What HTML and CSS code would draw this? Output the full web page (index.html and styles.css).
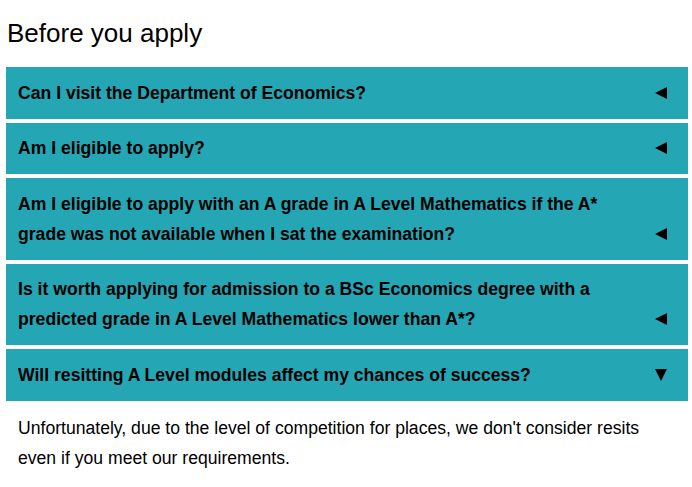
FILE: index.html
```html
<!DOCTYPE html>
<html lang="en">
    <head>
        <meta charset="UTF-8">
        <meta name="viewport" content="width=device-width, initial-scale=1.0">
        <title>Before you apply</title>
        <link rel="stylesheet" href="styles.css">
    </head>
    <body>
        <div id="faq">
            <h2>Before you apply</h2>
            <div class="question">
                <span class="q-text">Can I visit the Department of Economics?</span>
                <svg class="arrow" width="12" height="12" viewBox="0 0 12 12"><polygon points="12,0 12,12 0,6" fill="#000"/></svg>
            </div>
            <div class="question">
                <span class="q-text">Am I eligible to apply?</span>
                <svg class="arrow" width="12" height="12" viewBox="0 0 12 12"><polygon points="12,0 12,12 0,6" fill="#000"/></svg>
            </div>
            <div class="question">
                <span class="q-text">Am I eligible to apply with an A grade in A Level Mathematics if the A* grade was not available when I sat the examination?</span>
                <svg class="arrow" width="12" height="12" viewBox="0 0 12 12"><polygon points="12,0 12,12 0,6" fill="#000"/></svg>
            </div>
            <div class="question">
                <span class="q-text">Is it worth applying for admission to a BSc Economics degree with a predicted grade in A Level Mathematics lower than A*?</span>
                <svg class="arrow" width="12" height="12" viewBox="0 0 12 12"><polygon points="12,0 12,12 0,6" fill="#000"/></svg>
            </div>
            <div class="question open">
                <span class="q-text">Will resitting A Level modules affect my chances of success?</span>
                <svg class="arrow" width="12" height="12" viewBox="0 0 12 12"><polygon points="0,0 12,0 6,12" fill="#000"/></svg>
            </div>
            <p class="answer">Unfortunately, due to the level of competition for places, we don't consider resits even if you meet our requirements.</p>
        </div>
    </body>
</html>
```

FILE: styles.css
```css
body {
    font-family: "Liberation Sans", Arial, sans-serif;
    margin: 0;
    padding: 0;
    background-color: #fff;
    color: #000;
}

#faq {
    padding: 0 4px 0 6px;
}

h2 {
    font-size: 26px;
    font-weight: normal;
    line-height: 30px;
    margin: 18px 0 19px 1px;
    color: #000;
}

.question {
    display: flex;
    align-items: flex-end;
    justify-content: space-between;
    background-color: #25a6b4;
    padding: 10.75px 21px 10.75px 12px;
    margin-bottom: 4px;
    font-size: 17.6px;
    font-weight: bold;
    line-height: 30px;
    color: #000;
}

.q-text {
    width: 622px;
}

/* fleche alignee sur la derniere ligne */
.arrow {
    flex-shrink: 0;
    margin-bottom: 9px;
}

.open {
    margin-bottom: 0;
}

.answer {
    margin: 0;
    padding: 12.5px 12px;
    font-size: 17.6px;
    line-height: 30px;
    color: #000;
}
```
